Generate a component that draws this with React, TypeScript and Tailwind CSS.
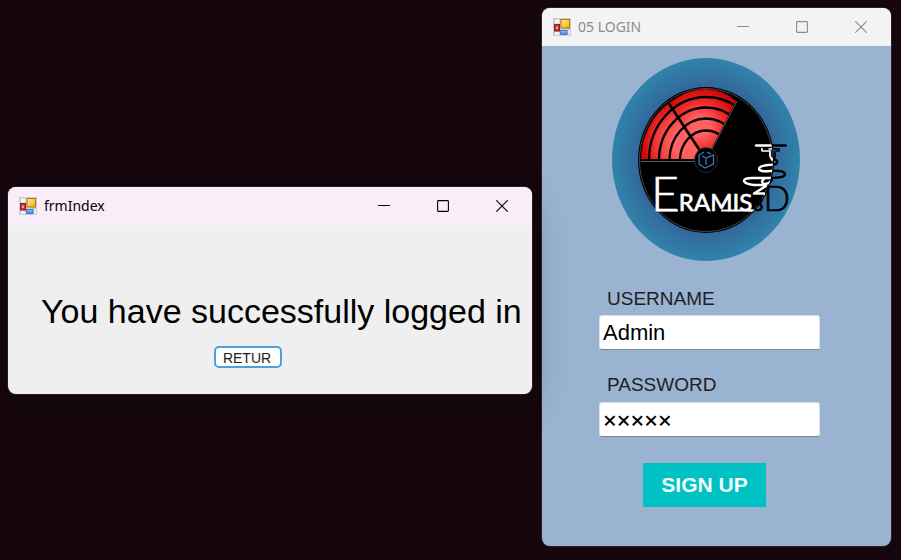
import { useState } from "react";
import type { ReactNode } from "react";

function FormIcon() {
  return (
    <svg viewBox="0 0 18 18" className="size-[18px] shrink-0" aria-hidden="true">
      <defs>
        <linearGradient id="gold" x1="0" y1="0" x2="1" y2="1">
          <stop offset="0" stopColor="#ffec9a" />
          <stop offset="1" stopColor="#f0b000" />
        </linearGradient>
        <linearGradient id="sky" x1="0" y1="0" x2="0" y2="1">
          <stop offset="0" stopColor="#8fc0ff" />
          <stop offset="1" stopColor="#3f7fe8" />
        </linearGradient>
      </defs>
      <rect width="18" height="18" fill="#cdcbcf" />
      <rect x="2" y="1.500" width="4.500" height="4" fill="#f5f3f6" />
      <rect x="2" y="14" width="4" height="3" fill="#f5f3f6" />
      <rect x="1.500" y="6.500" width="5" height="6.500" fill="#c0392f" stroke="#8f231c" />
      <rect x="3" y="8.500" width="2" height="2.500" fill="#f0a097" />
      <rect x="8" y="1.500" width="8.500" height="8.500" fill="url(#gold)" stroke="#a87a10" />
      <rect x="7.500" y="12.500" width="6.500" height="4" fill="url(#sky)" stroke="#3c6fc4" strokeWidth="0.800" />
      <rect x="15.500" y="12" width="1.500" height="5" fill="#f5f3f6" />
    </svg>
  );
}

function CaptionButton({ label, children }: { label: string; children: ReactNode }) {
  return (
    <button type="button" aria-label={label} className="flex h-full w-[59px] items-center justify-center">
      <svg viewBox="0 0 12 12" className="size-3" fill="none" stroke="currentColor" strokeWidth="1.100" aria-hidden="true">
        {children}
      </svg>
    </button>
  );
}

function TitleBar({ title, className }: { title: string; className: string }) {
  return (
    <header className={`flex h-[38px] items-center pr-px pl-[11px] font-['Noto_Sans',sans-serif] text-sm ${className}`}>
      <FormIcon />
      <h1 className="ml-[7px] flex-1 whitespace-nowrap">{title}</h1>
      <CaptionButton label="Minimize">
        <path d="M0 5.500H12" />
      </CaptionButton>
      <CaptionButton label="Maximize">
        <rect x="0.600" y="0.600" width="10.800" height="10.800" rx="0.800" />
      </CaptionButton>
      <CaptionButton label="Close">
        <path d="M0.300 0.300L11.700 11.700M11.700 0.300L0.300 11.700" />
      </CaptionButton>
    </header>
  );
}

function PrinterHead({ color }: { color: string }) {
  return (
    <g fill="none" stroke={color} strokeWidth="2.400" strokeLinecap="round" strokeLinejoin="round">
      <path d="M756 145.500H785.500" />
      <path d="M762 148.500V151H769M769 149H779V151H776" strokeWidth="1.600" />
      <path d="M770 151V156L772 160L775 157V152" strokeWidth="1.800" />
      <path d="M774 159Q779 161 776 164Q772 165 768 165Q759 166 759 169Q760 172 770 171Q784 170 785 174Q785 178 771 178H752Q744 178 744 181Q745 184 754 185H765" />
      <path d="M764 179Q760 182 764 184Q769 184 772 180" />
      <path d="M766 186L754 193.500H764" />
    </g>
  );
}

function Logo() {
  return (
    <svg viewBox="612 58 188 203" className="h-[203px] w-[188px]" role="img" aria-label="Eramis 3D">
      <defs>
        <radialGradient id="halo">
          <stop offset="0.650" stopColor="#345c98" />
          <stop offset="0.800" stopColor="#3270a0" />
          <stop offset="1" stopColor="#3083aa" />
        </radialGradient>
        <radialGradient id="redLeft" gradientUnits="userSpaceOnUse" cx="686" cy="142" r="44">
          <stop offset="0.300" stopColor="#ff6262" />
          <stop offset="0.650" stopColor="#f23c3c" />
          <stop offset="1" stopColor="#cf0606" />
        </radialGradient>
        <radialGradient id="redRight" gradientUnits="userSpaceOnUse" cx="700" cy="126" r="38">
          <stop offset="0.250" stopColor="#ff6262" />
          <stop offset="0.600" stopColor="#f03030" />
          <stop offset="1" stopColor="#cf0606" />
        </radialGradient>
        <clipPath id="fan">
          <path d="M706 159H641A65 70 0 0 1 669 103Q706 76 736 101Z" />
        </clipPath>
        <clipPath id="disc">
          <ellipse cx="706" cy="160" rx="67" ry="72" />
        </clipPath>
      </defs>
      <ellipse cx="706" cy="159.500" rx="94" ry="101.500" fill="url(#halo)" />
      <ellipse cx="706" cy="160" rx="68" ry="73" fill="#000" />
      <ellipse cx="706" cy="160" rx="66.500" ry="71.500" fill="none" stroke="#4a4a4a" strokeWidth="0.900" />
      <g clipPath="url(#fan)">
        <path d="M706 161V159L664 97L630 90V161Z" fill="url(#redLeft)" />
        <path d="M706 160L664 97L690 80L750 85Z" fill="url(#redRight)" />
        <g fill="none" stroke="#000" strokeWidth="2.300">
          <ellipse cx="706" cy="160" rx="57" ry="63" />
          <ellipse cx="706" cy="160" rx="47" ry="52.500" />
          <ellipse cx="706" cy="160" rx="36.500" ry="41.500" />
          <ellipse cx="706" cy="160" rx="26" ry="29.500" />
          <path d="M706 160L664 96" strokeWidth="2.600" />
        </g>
      </g>
      <path d="M641 161.500H695M712 149L737 101" fill="none" stroke="#666" strokeWidth="0.900" />
      <ellipse cx="706" cy="160" rx="11.500" ry="12.500" fill="#000" stroke="#333" strokeWidth="0.800" />
      <path
        d="M704 152L699 155V164L705 168L713.500 164V155L706 158L702 156M706 158V165M707 152L711 154"
        fill="none"
        stroke="#3c78b4"
        strokeWidth="1.300"
      />
      <g fontFamily="Lato, sans-serif" strokeWidth="0.700">
        <text x="651" y="211" fill="#fff" stroke="#fff">
          <tspan fontSize="48" fontWeight="300">E</tspan>
          <tspan fontSize="24">RAMIS</tspan>
        </text>
        <text x="752" y="211" fill="#000" stroke="#000">
          <tspan fontSize="20">3</tspan>
          <tspan fontSize="35" fontWeight="300">D</tspan>
        </text>
      </g>
      <path d="M657 210.500H678M721 210.500H752" stroke="#fff" strokeWidth="2" />
      <PrinterHead color="#000" />
      <g clipPath="url(#disc)">
        <PrinterHead color="#fff" />
        <path d="M765 194Q769 206 755 210.500H748" fill="none" stroke="#fff" strokeWidth="2.200" />
      </g>
    </svg>
  );
}

const fieldStyle =
  "h-[35px] w-[221px] rounded-[3px] border border-[#d5dfea] border-b-[#7f858c] bg-white px-[3px] text-black outline-none";

export default function App() {
  const [user, setUser] = useState("Admin");
  const [secret, setSecret] = useState("×××××");

  return (
    <main className="flex min-h-screen items-start gap-[10px] bg-[#15060d] py-2 pr-[10px] pl-2 font-['Liberation_Sans',Arial,sans-serif]">
      <section className="relative z-10 mt-[179px] min-w-0 flex-1 overflow-hidden rounded-lg bg-[#efefef] shadow-[0_12px_36px_rgba(0,0,0,0.2),0_0_0_1px_#2b2026]">
        <TitleBar title="frmIndex" className="bg-[#f9eef8] text-black" />
        <div className="flex flex-col items-center pt-[66px] pb-[26px]">
          <p className="self-start pl-[33px] text-[34px] leading-10 whitespace-nowrap text-black">You have successfully logged in</p>
          <button
            type="button"
            className="mt-[15px] mr-11 h-[22px] w-[68px] rounded-[5px] border-2 border-[#4f9fdd] bg-white pt-px pr-0.5 text-center text-sm leading-[18px] text-[#1a1a1a]"
          >
            RETUR
          </button>
        </div>
      </section>

      <section className="w-[349px] shrink-0 overflow-hidden rounded-lg bg-[#99b3d1] shadow-[0_0_0_1px_#2b2026]">
        <TitleBar title="05 LOGIN" className="bg-[#f3f3f3] text-[#8c8c8c]" />
        <form className="flex flex-col items-center pt-3 pb-[39px]" onSubmit={(e) => e.preventDefault()}>
          <div className="mr-[21px]">
            <Logo />
          </div>
          <div className="mt-[26px] mr-[14px] flex flex-col">
            <label htmlFor="username" className="pl-2 text-[19px] leading-6 text-[#1b1f24]">
              USERNAME
            </label>
            <input
              id="username"
              value={user}
              onChange={(e) => setUser(e.target.value)}
              className={`${fieldStyle} mt-1 text-[22px]`}
            />
            <label htmlFor="password" className="mt-[23px] pl-2 text-[19px] leading-6 text-[#1b1f24]">
              PASSWORD
            </label>
            <input
              id="password"
              autoComplete="off"
              value={secret}
              onChange={(e) => setSecret(e.target.value)}
              className={`${fieldStyle} mt-[5px] font-['Noto_Sans',sans-serif] text-2xl font-medium`}
            />
          </div>
          <button
            type="submit"
            className="mt-[26px] mr-6 h-11 w-[123px] bg-[#00c1c3] text-center text-[21px] font-bold text-[#f3fbfb]"
          >
            SIGN UP
          </button>
        </form>
      </section>
    </main>
  );
}
